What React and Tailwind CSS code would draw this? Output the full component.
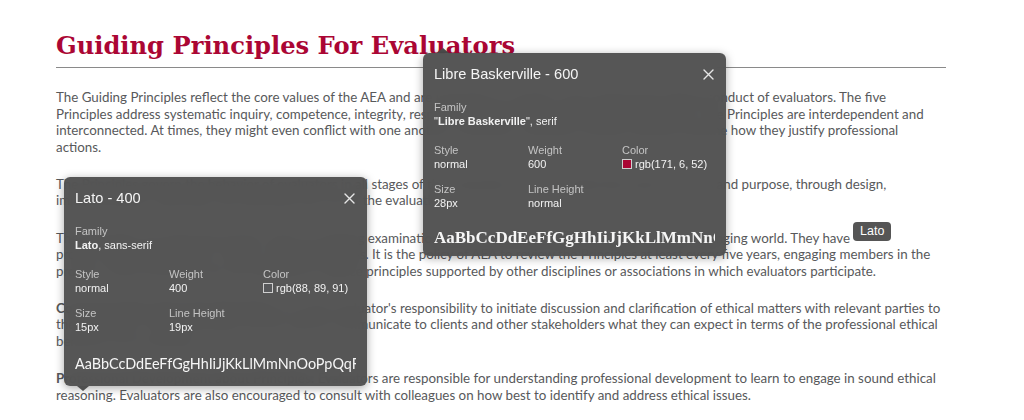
import React from "react";

const body = { fontFamily: "Lato, 'Noto Sans', sans-serif" };
const ui = { fontFamily: "'Liberation Sans', Arial, sans-serif" };

function Close() {
  return (
    <svg width="11" height="11" viewBox="0 0 11 11" className="block">
      <path d="M1 1 L10 10 M10 1 L1 10" stroke="#e6e6e6" strokeWidth="1.4" strokeLinecap="round" />
    </svg>
  );
}

function Field({ label, children }) {
  return (
    <div className="flex flex-col">
      <div className="text-[11px] leading-[14px] text-[#c4c4c4]">{label}</div>
      <div className="text-[11px] leading-[14px] text-[#f2f2f2] flex items-center gap-[3px]">{children}</div>
    </div>
  );
}

function Popover({ className, boxClass, sampleGap, title, family, familyRest, weight, color, swatch, size, lh, sample, sampleClass, arrow }) {
  return (
    <div className={"absolute w-[303px] " + className} style={ui}>
      {arrow === "top" && (
        <div className="absolute -top-[5px] left-[14px] w-0 h-0 border-l-[6px] border-r-[6px] border-b-[5px] border-l-transparent border-r-transparent border-b-[#4f4f4f]" />
      )}
      <div className={"rounded-[6px] bg-[#4f4f4f]/[0.96] backdrop-blur-sm shadow-[0_2px_10px_rgba(0,0,0,0.35)] pt-[12px] pl-[11px] pr-[11px] overflow-hidden " + boxClass}>
        <div className="flex items-center justify-between h-[19px]">
          <div className="text-[14.6px] leading-[19px] text-[#f4f4f4]">{title}</div>
          <div className="pr-[1px]"><Close /></div>
        </div>
        <div className="mt-[16px]">
          <Field label="Family">
            <span>
              {familyRest === "quoted" ? (
                <>
                  "<b className="font-bold">{family}</b>", serif
                </>
              ) : (
                <>
                  <b className="font-bold">{family}</b>, sans-serif
                </>
              )}
            </span>
          </Field>
        </div>
        <div className="grid grid-cols-[94px_94px_1fr] gap-y-[11px] mt-[15px]">
          <Field label="Style">normal</Field>
          <Field label="Weight">{weight}</Field>
          <Field label="Color">
            <span className={"inline-block w-[10px] h-[10px] border border-[#cfcfcf] " + swatch} />
            <span>{color}</span>
          </Field>
          <Field label="Size">{size}</Field>
          <Field label="Line Height">{lh}</Field>
          <div />
        </div>
        <div className={"whitespace-nowrap overflow-hidden text-[#f6f6f6] " + sampleGap + " " + sampleClass}>{sample}</div>
      </div>
      {arrow === "bottom" && (
        <div className="absolute -bottom-[5px] left-[13px] w-0 h-0 border-l-[6px] border-r-[6px] border-t-[5px] border-l-transparent border-r-transparent border-t-[#4f4f4f]" />
      )}
    </div>
  );
}

export default function App() {
  return (
    <div className="relative w-[1024px] h-[420px] overflow-hidden bg-white">
      <div className="pl-[56px] w-[946px]">
        <h1
          className="pt-[31px] pb-[6px] text-[24.2px] leading-[30px] font-bold text-[#ab0634] border-b border-[#8a8a8a]"
          style={{ fontFamily: "'DejaVu Serif', 'Liberation Serif', serif" }}
        >
          Guiding Principles For Evaluators
        </h1>
        <div className="mt-[21px] text-[13.35px] leading-[16.6px] text-[#58595b] flex flex-col gap-[20.5px]" style={body}>
          <p>
            The Guiding Principles reflect the core values of the AEA and are intended as a guide to the professional ethical conduct of evaluators. The five<br />
            Principles address systematic inquiry, competence, integrity, respect for people, and common good and equity. The Principles are interdependent and<br />
            interconnected. At times, they might even conflict with one another. Therefore, evaluators should carefully examine how they justify professional<br />
            actions.
          </p>
          <p>
            The Principles govern the behavior of evaluators in all stages of the evaluation from the initial discussion of focus and purpose, through design,<br />
            implementation, reporting, and ultimately the use of the evaluation.
          </p>
          <p>
            The Principles are living documents, open to ongoing examination and refinement to keep pace with our ever-changing world. They have<br />
            proven useful to evaluators, clients, and communities. It is the policy of AEA to review the Principles at least every five years, engaging members in the<br />
            process. These Principles are not intended to replace principles supported by other disciplines or associations in which evaluators participate.
          </p>
          <p>
            <b className="font-bold">Communication about the Principles:</b> It is each evaluator's responsibility to initiate discussion and clarification of ethical matters with relevant parties to<br />
            the evaluation. These Principles can be used to communicate to clients and other stakeholders what they can expect in terms of the professional ethical<br />
            behavior of an evaluator.
          </p>
          <p>
            <b className="font-bold">Professional Development about Principles:</b> Evaluators are responsible for understanding professional development to learn to engage in sound ethical<br />
            reasoning. Evaluators are also encouraged to consult with colleagues on how best to identify and address ethical issues.
          </p>
        </div>
      </div>

      <Popover
        className="left-[423px] top-[53px]"
        boxClass="pb-[7px]"
        sampleGap="mt-[17px]"
        title="Libre Baskerville - 600"
        family="Libre Baskerville"
        familyRest="quoted"
        weight="600"
        color="rgb(171, 6, 52)"
        swatch="bg-[#ab0634]"
        size="28px"
        lh="normal"
        sample="AaBbCcDdEeFfGgHhIiJjKkLlMmNnOoPpQqRrSsTt"
        sampleClass="text-[17px] leading-[22px] font-bold [font-family:'Liberation_Serif',serif]"
        arrow="top"
      />
      <Popover
        className="left-[64px] top-[177px]"
        boxClass="pb-[11px]"
        sampleGap="mt-[19px]"
        title="Lato - 400"
        family="Lato"
        familyRest="sans"
        weight="400"
        color="rgb(88, 89, 91)"
        swatch="bg-[#58595b]"
        size="15px"
        lh="19px"
        sample="AaBbCcDdEeFfGgHhIiJjKkLlMmNnOoPpQqRrSsTt"
        sampleClass="text-[14.4px] leading-[22px] [font-family:Lato,sans-serif]"
        arrow="bottom"
      />

      <div
        className="absolute left-[853px] top-[222px] h-[19px] px-[7px] rounded-[4px] bg-[#555555] text-white text-[12.5px] leading-[19px]"
        style={ui}
      >
        Lato
      </div>
    </div>
  );
}
